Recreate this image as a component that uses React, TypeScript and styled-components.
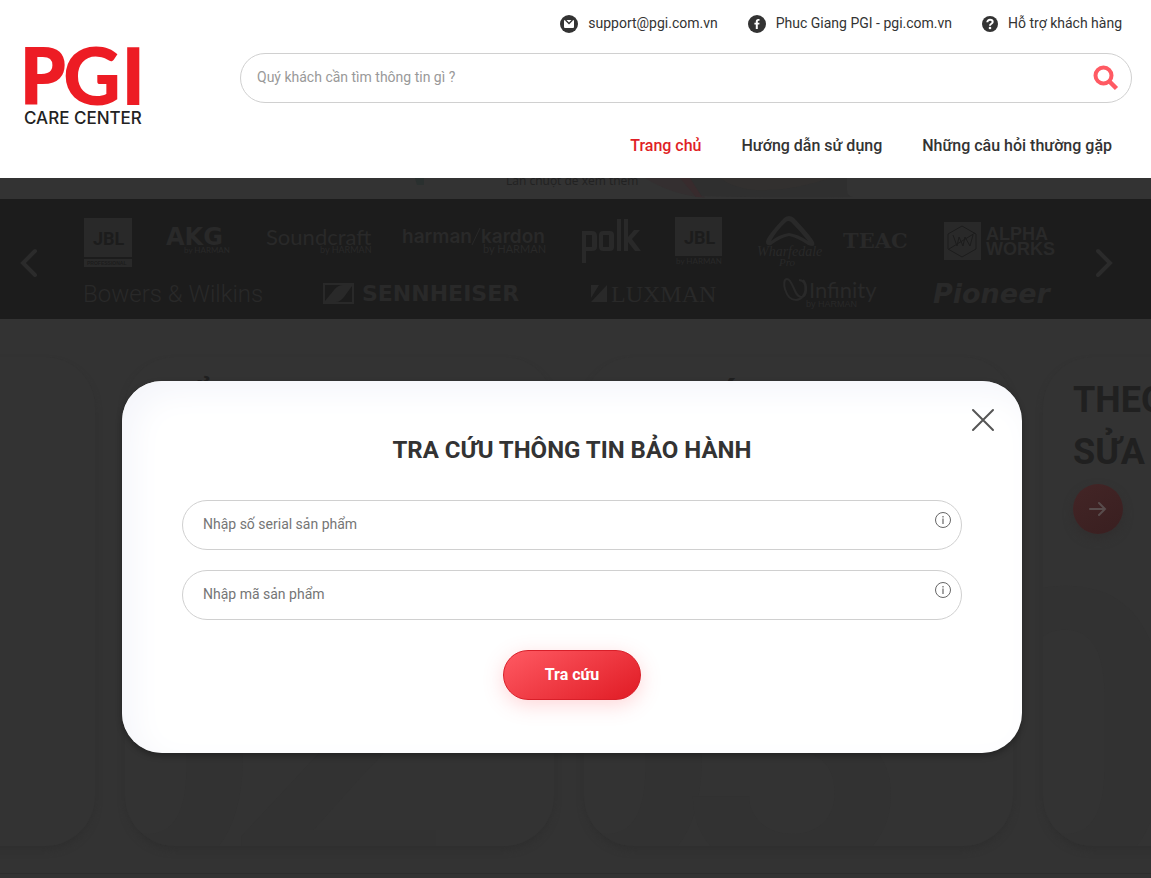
import React from "react";
import styled, { createGlobalStyle } from "styled-components";

const Global = createGlobalStyle`
  * { box-sizing: border-box; }
  body { margin: 0; background: #333; color: #333; font-family: Roboto, "Liberation Sans", sans-serif; }
  a { color: inherit; text-decoration: none; }
`;

const Page = styled.div`
  position: relative;
  min-height: 100vh;
  overflow: hidden;
`;

const Header = styled.header`
  position: relative;
  z-index: 2;
  display: flex;
  gap: 96px;
  height: 178px;
  padding: 0 19px 0 24px;
  background: #fff;
`;

const LogoLink = styled.a`
  flex: none;
  padding-top: 44px;
  svg { display: block; overflow: visible; }
`;

const HeaderBody = styled.div`
  flex: 1;
  display: flex;
  flex-direction: column;
`;

const Contacts = styled.div`
  display: flex;
  justify-content: flex-end;
  gap: 30px;
  padding: 13px 10px 0 0;
  height: 53px;
`;

const Contact = styled.a`
  display: flex;
  align-items: center;
  gap: 10px;
  height: 20px;
  font-size: 14px;
  line-height: 20px;
  svg { display: block; margin-top: 2px; }
`;

const Search = styled.form`
  display: flex;
  align-items: center;
  height: 50px;
  padding: 0 12px 0 16px;
  border: 1px solid #d0d0d0;
  border-radius: 25px;
`;

const SearchInput = styled.input`
  flex: 1;
  border: 0;
  outline: 0;
  padding: 0 0 2px;
  background: none;
  font: 14px/20px Roboto, sans-serif;
  &::placeholder { color: #999; opacity: 1; }
`;

const IconButton = styled.button`
  display: block;
  flex: none;
  padding: 0;
  border: 0;
  background: none;
  cursor: pointer;
  svg { display: block; }
`;

const Nav = styled.nav`
  display: flex;
  justify-content: flex-end;
  gap: 40px;
  padding: 33px 20px 0 0;
`;

const NavLink = styled.a<{ $active?: boolean }>`
  font-size: 16px;
  line-height: 20px;
  font-weight: 500;
  color: ${(p) => (p.$active ? "#e01f26" : "#333")};
`;

const Banner = styled.section`
  height: 21px;
  svg { display: block; width: 100%; height: 21px; }
`;

const Brands = styled.section`
  display: flex;
  align-items: center;
  justify-content: space-between;
  height: 120px;
  padding: 0 38px 0 20px;
  background: #1c1c1c;
  color: #292929;
`;

const BrandGrid = styled.div`
  flex: 1;
  margin: 0 36px 0 42px;
  svg { display: block; width: 100%; height: 120px; }
`;

const Steps = styled.section`
  display: flex;
  gap: 30px;
  padding-top: 38px;
  margin-left: -334px;
  height: 555px;
  border-bottom: 1px solid #2d2d2d;
`;

const StepShadow = styled.div`
  flex: none;
  height: 489px;
  border-radius: 50px;
  box-shadow: 0 5px 7px -1px #2f2f2f;
`;

const Step = styled.article`
  position: relative;
  overflow: hidden;
  width: 429px;
  height: 489px;
  padding: 17px 30px;
  border-radius: 50px;
  background: #333;
`;

const StepTitle = styled.h2`
  position: relative;
  margin: 0;
  width: 200px;
  font-size: 36px;
  line-height: 52px;
  font-weight: 700;
  color: #202020;
`;

const StepLink = styled.a`
  position: relative;
  display: flex;
  align-items: center;
  justify-content: center;
  width: 50px;
  height: 50px;
  margin-top: 6px;
  border-radius: 25px;
  background: linear-gradient(150deg, #432526, #391f20);
  box-shadow: 0 5px 10px #312f2f;
`;

const StepNumber = styled.div`
  position: absolute;
  left: -93px;
  bottom: -132px;
  display: flex;
  font-size: 400px;
  line-height: 480px;
  font-weight: 700;
  color: #323232;
`;

const Digit = styled.span`
  & + & { margin-left: -40px; }
`;

const Overlay = styled.div`
  position: absolute;
  inset: 0;
  z-index: 1;
  display: flex;
  align-items: flex-start;
  justify-content: center;
  padding: 381px 7px 0 0;
`;

const Dialog = styled.section`
  position: relative;
  width: 900px;
  max-width: 90%;
  padding: 51px 60px 53px;
  border-radius: 40px;
  background: #fff;
  box-shadow: 0 3px 6px rgba(0, 0, 0, 0.3), inset 12px 12px 32px #f5f6fb;
`;

const CloseSlot = styled.div`
  position: absolute;
  top: 27px;
  right: 27px;
`;

const DialogTitle = styled.h1`
  margin: 0 0 32px;
  font-size: 24px;
  line-height: 36px;
  font-weight: 700;
  text-align: center;
`;

const Field = styled.div`
  display: flex;
  align-items: flex-start;
  height: 50px;
  margin-bottom: 20px;
  padding: 11px 10px 0 20px;
  border: 1px solid #d0d0d0;
  border-radius: 25px;
`;

const FieldInput = styled.input`
  flex: 1;
  border: 0;
  outline: 0;
  padding: 2px 0;
  background: none;
  font: 14px/20px Roboto, sans-serif;
  &::placeholder { color: #757575; opacity: 1; }
`;

const Actions = styled.div`
  display: flex;
  justify-content: center;
  padding-top: 10px;
`;

const Submit = styled.button`
  width: 138px;
  height: 50px;
  padding: 0;
  border: 1px solid #d81f29;
  border-radius: 25px;
  background: linear-gradient(150deg, #ff5a63, #e01b24);
  box-shadow: 0 5px 20px rgba(255, 90, 99, 0.25);
  color: #fff;
  font: 700 16px/20px Roboto, sans-serif;
`;

const Logo = () => (
  <svg width="120" height="84" viewBox="0 0 120 84" role="img" aria-label="PGI Care Center">
    <g fill="#ed1c24" fontFamily="Open Sans" fontWeight="700" fontSize="80">
      <text x="-6" y="61">P</text>
      <text x="39" y="61" fontFamily="Lato" fontWeight="900">G</text>
      <text x="96" y="61">I</text>
    </g>
    <text x="0" y="80" fill="#222" fontFamily="Inter" fontWeight="500" fontSize="17">CARE CENTER</text>
  </svg>
);

const MailIcon = () => (
  <svg width="18" height="18" viewBox="0 0 18 18">
    <circle cx="9" cy="9" r="9" fill="#333" />
    <rect x="4" y="5" width="10" height="8" rx="1" fill="#fff" />
    <path d="M5.500 5 9 8.600 12.500 5" fill="none" stroke="#333" strokeWidth="1.400" />
  </svg>
);

const FacebookIcon = () => (
  <svg width="18" height="18" viewBox="0 0 18 18">
    <circle cx="9" cy="9" r="9" fill="#333" />
    <path d="M7.800 14V9.600H6.400V7.700h1.400V6.500C7.800 4.900 8.700 4 10.200 4h1.300v1.800h-.9c-.6 0-.8.3-.8.800v1.100h1.700l-.2 1.900H9.800V14z" fill="#fff" />
  </svg>
);

const HelpIcon = () => (
  <svg width="16" height="16" viewBox="0 0 16 16">
    <circle cx="8" cy="8" r="8" fill="#333" />
    <path d="M5.300 6.300C5.300 4.600 6.500 3.800 8 3.800s2.700.8 2.700 2.200C10.700 7.800 8 7.800 8 9.700" fill="none" stroke="#fff" strokeWidth="2" />
    <circle cx="8" cy="12" r="1.300" fill="#fff" />
  </svg>
);

const SearchIcon = () => (
  <svg width="26" height="26" viewBox="0 0 26 26" fill="none" stroke="#ff5a63">
    <circle cx="10.500" cy="10.500" r="8" strokeWidth="4" />
    <path d="m16.500 16.500 7 7" strokeWidth="4.500" />
  </svg>
);

const CloseIcon = () => (
  <svg width="24" height="24" viewBox="0 0 24 24" stroke="#555" strokeWidth="2" strokeLinecap="round">
    <path d="m2 2 20 20M22 2 2 22" />
  </svg>
);

const InfoIcon = () => (
  <svg width="16" height="16" viewBox="0 0 16 16" fill="none" stroke="#666">
    <circle cx="8" cy="8" r="7.500" />
    <path d="M8 6.500V12M8 4v1.500" strokeWidth="1.200" />
  </svg>
);

const Chevron = ({ right }: { right?: boolean }) => (
  <svg width="18" height="36" viewBox="0 0 18 36" fill="none" stroke="#2b2b2b" strokeWidth="4" strokeLinecap="round">
    <path d={right ? "m3 10 12 12L3 34" : "M15 10 3 22l12 12"} />
  </svg>
);

const BrandLogos = () => (
  <svg viewBox="80 199 979 120" fill="currentColor" fontFamily="Liberation Sans">
    <rect x="84" y="218" width="48" height="39" />
    <rect x="84" y="259" width="48" height="8" />
    <g fill="#1c1c1c">
      <text x="93" y="245" fontFamily="Roboto" fontWeight="700" fontSize="18">JBL</text>
      <text x="87" y="265" fontWeight="700" fontSize="5">PROFESSIONAL</text>
    </g>
    <text x="166" y="245" fontFamily="DejaVu Sans" fontWeight="700" fontSize="24">AKG</text>
    <text x="184" y="253" fontFamily="Lato" fontSize="8">by HARMAN</text>
    <text x="266" y="245" fontFamily="Lato" fontSize="22">Soundcraft</text>
    <text x="320" y="253" fontFamily="Lato" fontSize="9">by HARMAN</text>
    <text x="402" y="243" fontFamily="Inter" fontWeight="600" fontSize="19">harman</text>
    <path d="m472 245 8-17" stroke="currentColor" />
    <text x="481" y="243" fontFamily="Inter" fontWeight="600" fontSize="19">kardon</text>
    <text x="483" y="253" fontFamily="Lato" fontSize="11">by HARMAN</text>
    <path fillRule="evenodd" d="M582 231h10q5 0 5 5v11q0 4-5 4h-6v12h-4zM586 235v12h6v-12zM603 231h7q4 0 4 4v12q0 4-4 4h-7q-4 0-4-4v-12q0-4 4-4zM603 235v12h6v-12zM617 219h4v32h-4zM624 219h4v18l6-7h6l-8 9 9 12h-6l-7-9v9h-4z" />
    <rect x="675" y="217" width="47" height="39" />
    <text x="684" y="244" fill="#1c1c1c" fontFamily="Roboto" fontWeight="700" fontSize="18">JBL</text>
    <text x="676" y="264" fontFamily="Lato" fontSize="8">by HARMAN</text>
    <path fillRule="evenodd" d="M766 242q0-5 18-24 5-4 10 0 17 18 20 24 2 6-6 3-10-7-19-9-9 2-18 9-5 1-5-3zm5-1q9-7 18-8 9 1 19 8-8-10-17-19-3-2-5 0-9 8-15 19z" />
    <text x="757" y="256" fontFamily="Liberation Serif" fontStyle="italic" fontSize="14">Wharfedale</text>
    <text x="779" y="266" fontFamily="Liberation Serif" fontStyle="italic" fontSize="11">Pro</text>
    <text x="843" y="248" fontFamily="DejaVu Serif" fontWeight="700" fontSize="21">TEAC</text>
    <rect x="944" y="222" width="37" height="38" />
    <path d="m962 226 14 8v15l-14 8-14-8v-15zM953 235l4 11 2-9 4 9 2-9 5 9 3-11M949 249l26-16" fill="none" stroke="#1c1c1c" />
    <g fontWeight="700" fontSize="18">
      <text x="986" y="240">ALPHA</text>
      <text x="986" y="255">WORKS</text>
    </g>
    <text x="83" y="302" fontFamily="Roboto" fontWeight="300" fontSize="24">Bowers &amp; Wilkins</text>
    <path fillRule="evenodd" d="M323 283h31v21h-31zm2 2v16l9-11q4-5 9-5zm27 1v16h-16q4 0 8-5z" />
    <text x="362" y="301" fontFamily="DejaVu Sans" fontWeight="700" fontSize="22">SENNHEISER</text>
    <path d="M591 285h8l-8 13zM607 285v17h-16z" />
    <text x="611" y="302" fontFamily="Liberation Serif" fontSize="24">LUXMAN</text>
    <path d="M799 280c10 0 8 20-3 20s-15-21-9-21 7 18 14 18 6-13 2-17" fill="none" stroke="currentColor" strokeWidth="2" />
    <text x="809" y="298" fontFamily="Lato" fontSize="22">Infinity</text>
    <text x="806" y="307" fontSize="9">by HARMAN</text>
    <text x="933" y="303" fontFamily="DejaVu Sans" fontStyle="italic" fontWeight="700" fontSize="27">Pioneer</text>
  </svg>
);

const steps = ["THÔNG TIN BẢO HÀNH", "KIỂM TRA BẢO HÀNH", "TRA CỨU BẢO HÀNH", "THEO DÕI SỬA CHỮA"];

export default function App() {
  return (
    <Page>
      <Global />
      <Header>
        <LogoLink href="#"><Logo /></LogoLink>
        <HeaderBody>
          <Contacts>
            <Contact href="#"><MailIcon />support@pgi.com.vn</Contact>
            <Contact href="#"><FacebookIcon />Phuc Giang PGI - pgi.com.vn</Contact>
            <Contact href="#"><HelpIcon />Hỗ trợ khách hàng</Contact>
          </Contacts>
          <Search>
            <SearchInput aria-label="Tìm kiếm" placeholder="Quý khách cần tìm thông tin gì ?" />
            <IconButton type="button" aria-label="Tìm"><SearchIcon /></IconButton>
          </Search>
          <Nav>
            <NavLink href="#" $active>Trang chủ</NavLink>
            <NavLink href="#">Hướng dẫn sử dụng</NavLink>
            <NavLink href="#">Những câu hỏi thường gặp</NavLink>
          </Nav>
        </HeaderBody>
      </Header>
      <main>
        <Banner>
          <svg viewBox="0 0 1151 21" preserveAspectRatio="xMidYMin slice">
            <path d="M645 0h50l10 20q-35-4-60-20z" fill="#342f30" />
            <path d="M690 0h157v12q0 6 6 7-80 1-153-1z" fill="#2f2f2f" />
            <path d="M720 0h110q-40 14-75 12-22-2-35-12z" fill="#32302f" />
            <path d="M690 0l12 19h-6L680 0z" fill="#382b2d" />
            <path d="M415 0h9v7h-7z" fill="#2a302f" />
            <text x="506" y="7" fontFamily="Open Sans" fontSize="12" fill="#222">Lăn chuột để xem thêm</text>
          </svg>
        </Banner>
        <Brands>
          <IconButton type="button" aria-label="Trước"><Chevron /></IconButton>
          <BrandGrid><BrandLogos /></BrandGrid>
          <IconButton type="button" aria-label="Sau"><Chevron right /></IconButton>
        </Brands>
        <Steps>
          {steps.map((title, i) => (
            <StepShadow key={title}>
              <Step>
                <StepNumber aria-hidden="true"><Digit>0</Digit><Digit>{i + 1}</Digit></StepNumber>
                <StepTitle>{title}</StepTitle>
                <StepLink href="#" aria-label={title}>
                  <svg width="18" height="16" viewBox="0 0 18 16" fill="none" stroke="#584c4c" strokeWidth="2" strokeLinecap="round">
                    <path d="M1 8h15M10 2l6 6-6 6" />
                  </svg>
                </StepLink>
              </Step>
            </StepShadow>
          ))}
        </Steps>
      </main>
      <Overlay>
        <Dialog role="dialog" aria-labelledby="lookup-title">
          <CloseSlot><IconButton type="button" aria-label="Đóng"><CloseIcon /></IconButton></CloseSlot>
          <DialogTitle id="lookup-title">TRA CỨU THÔNG TIN BẢO HÀNH</DialogTitle>
          <Field>
            <FieldInput aria-label="Số serial sản phẩm" placeholder="Nhập số serial sản phẩm" />
            <IconButton type="button" aria-label="Thông tin số serial"><InfoIcon /></IconButton>
          </Field>
          <Field>
            <FieldInput aria-label="Mã sản phẩm" placeholder="Nhập mã sản phẩm" />
            <IconButton type="button" aria-label="Thông tin mã sản phẩm"><InfoIcon /></IconButton>
          </Field>
          <Actions><Submit type="button">Tra cứu</Submit></Actions>
        </Dialog>
      </Overlay>
    </Page>
  );
}
